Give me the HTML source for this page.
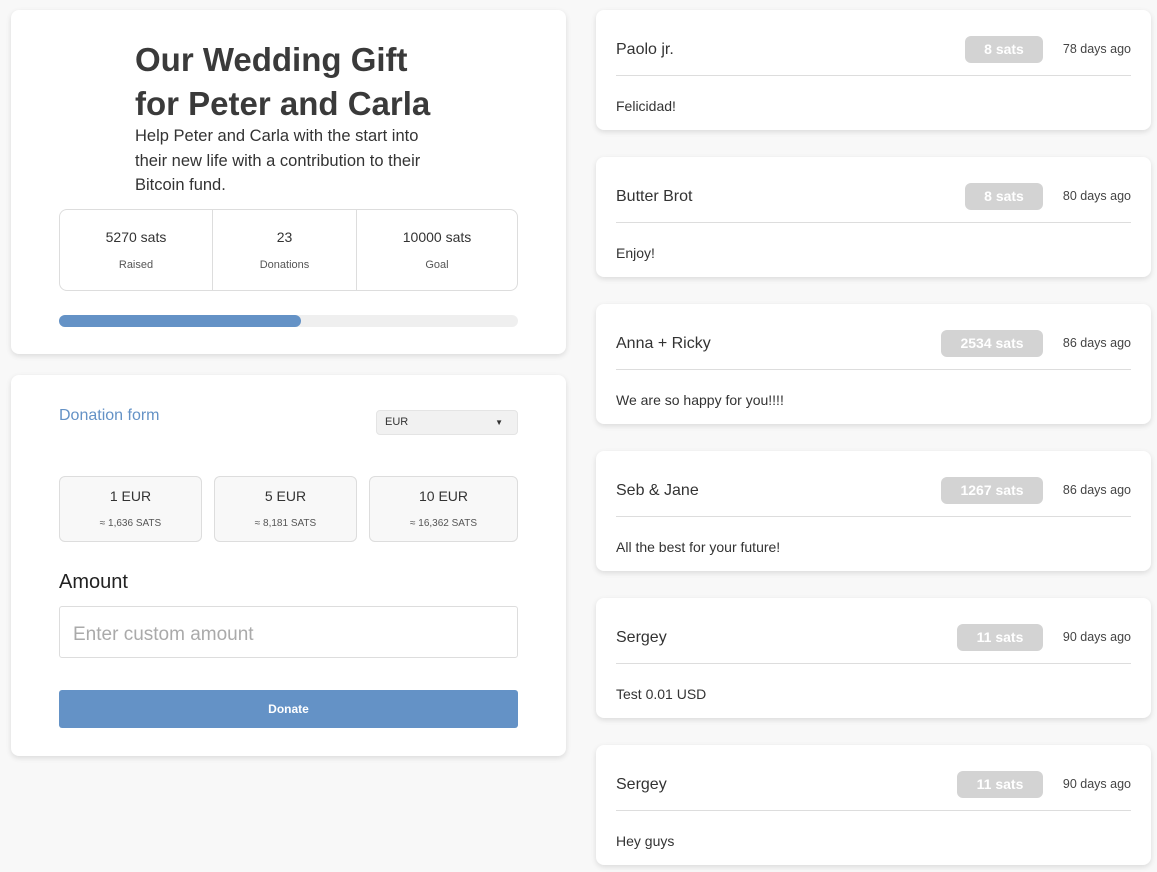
<!DOCTYPE html>
<html><head><meta charset="utf-8"><style>
*{box-sizing:border-box;margin:0;padding:0}
body{width:1157px;height:872px;background:#f8f8f8;font-family:"Liberation Sans",sans-serif;color:#333;position:relative;overflow:hidden}
.card{position:absolute;background:#fff;border-radius:8px;box-shadow:0 2px 6px rgba(0,0,0,.12)}
.a{position:absolute;white-space:nowrap}
.badge{position:absolute;left:369px;top:26px;width:78px;height:27px;background:#d3d3d3;border-radius:6px;color:#fff;font-weight:bold;font-size:14px;text-align:center;line-height:27px}
.nm{left:20px;top:31px;font-size:16px}
</style></head><body>
<div class="card" style="left:11px;top:10px;width:555px;height:344px">
 <div class="a" style="left:124px;top:28px;font-size:33px;font-weight:bold;line-height:44px;color:#3a3a3a">Our Wedding Gift<br>for Peter and Carla</div>
 <div class="a" style="left:124px;top:114px;font-size:16.5px;line-height:24.5px;color:#333">Help Peter and Carla with the start into<br>their new life with a contribution to their<br>Bitcoin fund.</div>
 <div class="a" style="left:48px;top:199px;width:459px;height:82px;border:1px solid #ddd;border-radius:8px;display:flex">
  <div style="width:153px;border-right:1px solid #ddd;text-align:center"><div style="font-size:14px;margin-top:19px">5270 sats</div><div style="font-size:11px;color:#555;margin-top:14px">Raised</div></div>
  <div style="width:144px;border-right:1px solid #ddd;text-align:center"><div style="font-size:14px;margin-top:19px">23</div><div style="font-size:11px;color:#555;margin-top:14px">Donations</div></div>
  <div style="flex:1;text-align:center"><div style="font-size:14px;margin-top:19px">10000 sats</div><div style="font-size:11px;color:#555;margin-top:14px">Goal</div></div>
 </div>
 <div class="a" style="left:48px;top:305px;width:459px;height:12px;background:#efefef;border-radius:6px"><div style="width:242px;height:12px;background:#6492c6;border-radius:6px"></div></div>
</div>
<div class="card" style="left:11px;top:375px;width:555px;height:381px">
 <div class="a" style="left:48px;top:32px;font-size:16px;color:#6492c6">Donation form</div>
 <div class="a" style="left:365px;top:35px;width:142px;height:25px;background:#f1f1f1;border:1px solid #e4e4e4;border-radius:4px;font-size:11px;line-height:23px;padding-left:8px">EUR<span style="position:absolute;right:14px;top:0;font-size:8px">▼</span></div>
 <div class="a" style="left:48px;top:101px;width:143px;height:66px;background:#f8f8f8;border:1px solid #ddd;border-radius:6px;text-align:center"><div style="font-size:14px;margin-top:11px">1 EUR</div><div style="font-size:10px;color:#555;margin-top:14px">≈ 1,636 SATS</div></div>
 <div class="a" style="left:203px;top:101px;width:143px;height:66px;background:#f8f8f8;border:1px solid #ddd;border-radius:6px;text-align:center"><div style="font-size:14px;margin-top:11px">5 EUR</div><div style="font-size:10px;color:#555;margin-top:14px">≈ 8,181 SATS</div></div>
 <div class="a" style="left:358px;top:101px;width:149px;height:66px;background:#f8f8f8;border:1px solid #ddd;border-radius:6px;text-align:center"><div style="font-size:14px;margin-top:11px">10 EUR</div><div style="font-size:10px;color:#555;margin-top:14px">≈ 16,362 SATS</div></div>
 <div class="a" style="left:48px;top:196px;font-size:20px;color:#222">Amount</div>
 <div class="a" style="left:48px;top:231px;width:459px;height:52px;border:1px solid #ddd;border-radius:3px;font-size:19px;color:#aaa;line-height:56px;padding-left:13px">Enter custom amount</div>
 <div class="a" style="left:48px;top:315px;width:459px;height:38px;background:#6492c6;border-radius:3px;color:#fff;font-weight:bold;font-size:12px;text-align:center;line-height:38px">Donate</div>
</div>
<div class="card" style="left:596px;top:10px;width:555px;height:120px"><div class="a nm">Paolo jr.</div><div class="badge">8 sats</div><div class="a" style="right:20px;top:32px;font-size:12.5px;color:#444">78 days ago</div><div class="a" style="left:20px;top:65px;width:515px;border-top:1px solid #ddd"></div><div class="a" style="left:20px;top:88px;font-size:14px">Felicidad!</div></div>
<div class="card" style="left:596px;top:157px;width:555px;height:120px"><div class="a nm">Butter Brot</div><div class="badge">8 sats</div><div class="a" style="right:20px;top:32px;font-size:12.5px;color:#444">80 days ago</div><div class="a" style="left:20px;top:65px;width:515px;border-top:1px solid #ddd"></div><div class="a" style="left:20px;top:88px;font-size:14px">Enjoy!</div></div>
<div class="card" style="left:596px;top:304px;width:555px;height:120px"><div class="a nm">Anna + Ricky</div><div class="badge" style="left:345px;width:102px">2534 sats</div><div class="a" style="right:20px;top:32px;font-size:12.5px;color:#444">86 days ago</div><div class="a" style="left:20px;top:65px;width:515px;border-top:1px solid #ddd"></div><div class="a" style="left:20px;top:88px;font-size:14px">We are so happy for you!!!!</div></div>
<div class="card" style="left:596px;top:451px;width:555px;height:120px"><div class="a nm">Seb &amp; Jane</div><div class="badge" style="left:345px;width:102px">1267 sats</div><div class="a" style="right:20px;top:32px;font-size:12.5px;color:#444">86 days ago</div><div class="a" style="left:20px;top:65px;width:515px;border-top:1px solid #ddd"></div><div class="a" style="left:20px;top:88px;font-size:14px">All the best for your future!</div></div>
<div class="card" style="left:596px;top:598px;width:555px;height:120px"><div class="a nm">Sergey</div><div class="badge" style="left:361px;width:86px">11 sats</div><div class="a" style="right:20px;top:32px;font-size:12.5px;color:#444">90 days ago</div><div class="a" style="left:20px;top:65px;width:515px;border-top:1px solid #ddd"></div><div class="a" style="left:20px;top:88px;font-size:14px">Test 0.01 USD</div></div>
<div class="card" style="left:596px;top:745px;width:555px;height:120px"><div class="a nm">Sergey</div><div class="badge" style="left:361px;width:86px">11 sats</div><div class="a" style="right:20px;top:32px;font-size:12.5px;color:#444">90 days ago</div><div class="a" style="left:20px;top:65px;width:515px;border-top:1px solid #ddd"></div><div class="a" style="left:20px;top:88px;font-size:14px">Hey guys</div></div>
</body></html>
